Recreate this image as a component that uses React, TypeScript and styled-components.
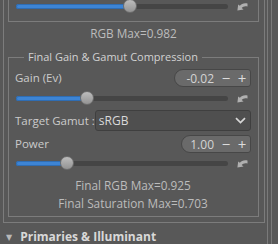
import React from "react";
import styled, { createGlobalStyle } from "styled-components";

const GlobalStyle = createGlobalStyle`
  html, body {
    margin: 0;
    padding: 0;
    background: #585858;
  }
  body {
    font-family: "Open Sans", "DejaVu Sans", sans-serif;
    font-size: 11.5px;
    color: #cbcbcb;
  }
`;

const Screen = styled.div`
  width: 278px;
  height: 244px;
  overflow: hidden;
  display: flex;
  flex-direction: row;
  background: #585858;
`;

const Main = styled.div`
  width: 266px;
  display: flex;
  flex-direction: column;
`;

const SideStrip = styled.div`
  flex: 1;
  display: flex;
  border-left: 1px solid #7a7a7a;
  margin-left: 1px;
  padding-left: 3px;
  div {
    border-left: 1px solid #7a7a7a;
    width: 100%;
  }
`;

const OuterPanel = styled.div`
  margin-left: 3px;
  width: 262px;
  box-sizing: border-box;
  border: 1px solid #7c7c7c;
  border-top: none;
  padding: 0 5px 5px 4px;
  display: flex;
  flex-direction: column;
`;

const TopBox = styled.div`
  border: 1px solid #7c7c7c;
  border-top: none;
  height: 22px;
  box-sizing: border-box;
  padding: 0 7px 0 6px;
`;

const Info = styled.div<{ $mt?: number }>`
  text-align: center;
  line-height: 16px;
  color: #bcbcbc;
  font-size: 11.8px;
  margin-top: ${(p) => p.$mt ?? 0}px;
`;

const Group = styled.fieldset`
  margin: 8px 0 0 0;
  padding: 0 7px 5px 6px;
  border: 1px solid #7c7c7c;
  min-width: 0;
  display: flex;
  flex-direction: column;
`;

const Legend = styled.legend`
  padding: 0 4px;
  margin-left: 9px;
  line-height: 16px;
  font-size: 11px;
  color: #d2d2d2;
`;

const Row = styled.div<{ $mt?: number; $h: number }>`
  display: flex;
  align-items: center;
  justify-content: space-between;
  height: ${(p) => p.$h}px;
  margin-top: ${(p) => p.$mt ?? 0}px;
`;

const Label = styled.span`
  line-height: 16px;
  color: #cbcbcb;
  white-space: nowrap;
`;

const Spin = styled.div<{ $w: number }>`
  width: ${(p) => p.$w}px;
  height: 18px;
  box-sizing: border-box;
  border: 1px solid #474747;
  border-radius: 9px 3px 3px 9px;
  background: #6a6a6a;
  display: flex;
  align-items: center;
  justify-content: flex-end;
  color: #d4d4d4;
`;

const SpinValue = styled.span`
  font-size: 12px;
  margin-right: 4px;
`;

const SpinButton = styled.span`
  width: 16px;
  text-align: center;
  font-size: 15px;
  line-height: 16px;
  color: #dcdcdc;
`;

const SliderRow = styled.div<{ $mt?: number }>`
  display: flex;
  align-items: center;
  height: 12px;
  margin-top: ${(p) => p.$mt ?? 0}px;
`;

const Track = styled.div`
  position: relative;
  margin-left: 1px;
  width: 212px;
  height: 5px;
  border-radius: 3px;
  background: #454545;
`;

const Fill = styled.div`
  height: 100%;
  border-radius: 3px;
  background: #3d84d4;
  box-shadow: inset 0 0 0 1px #2f6db3;
`;

const Knob = styled.div`
  position: absolute;
  top: 50%;
  width: 14px;
  height: 14px;
  margin: -7px 0 0 -7px;
  border-radius: 50%;
  box-sizing: border-box;
  border: 1px solid #6c6c6c;
  background: linear-gradient(#bdbdbd, #939393);
`;

const Reset = styled.div`
  flex: 1;
  display: flex;
  justify-content: center;
  padding-left: 5px;
  svg {
    display: block;
  }
`;

const Select = styled.div`
  width: 157px;
  height: 21px;
  box-sizing: border-box;
  border: 1px solid #3f3f3f;
  border-radius: 3px;
  background: #4f4f4f;
  display: flex;
  align-items: center;
  justify-content: space-between;
  padding: 0 4px 0 3px;
  color: #dadada;
  font-size: 12px;
`;

const Footer = styled.div`
  margin-top: 6px;
  padding-left: 6px;
  display: flex;
  align-items: center;
  gap: 8px;
  font-weight: bold;
  font-size: 12px;
  line-height: 16px;
  color: #d8d8d8;
`;

const Triangle = styled.span`
  font-size: 8px;
  color: #b8b8b8;
`;

const ResetIcon = () => (
  <svg width="12" height="9" viewBox="0 0 12 9">
    <path
      d="M11.5 1.6 C8.2 0.9 5.3 1.8 3.9 3.8 L2.2 2.4 L1.4 8.6 L7.6 7.6 L5.7 6.1 C7 4.5 9 3.7 11.5 4.6 Z"
      fill="#b0b0b0"
    />
  </svg>
);

const Chevron = () => (
  <svg width="11" height="7" viewBox="0 0 11 7">
    <path d="M1 1.2 L5.5 5.6 L10 1.2" stroke="#d6d6d6" strokeWidth="1.7" fill="none" />
  </svg>
);

const Slider = ({ value, mt }: { value: number; mt?: number }) => (
  <SliderRow $mt={mt}>
    <Track>
      <Fill style={{ width: `${value * 100}%` }} />
      <Knob style={{ left: `${value * 100}%` }} />
    </Track>
    <Reset>
      <ResetIcon />
    </Reset>
  </SliderRow>
);

const SpinBox = ({ value, width }: { value: string; width: number }) => (
  <Spin $w={width}>
    <SpinValue>{value}</SpinValue>
    <SpinButton>−</SpinButton>
    <SpinButton>+</SpinButton>
  </Spin>
);

export default function App() {
  return (
    <Screen>
      <GlobalStyle />
      <Main>
        <OuterPanel>
          <TopBox>
            <Slider value={0.54} />
          </TopBox>
          <Info $mt={3}>RGB Max=0.982</Info>
          <Group>
            <Legend>Final Gain &amp; Gamut Compression</Legend>
            <Row $h={18} $mt={4}>
              <Label>Gain (Ev)</Label>
              <SpinBox value="-0.02" width={77} />
            </Row>
            <Slider value={0.335} mt={5} />
            <Row $h={21} $mt={6}>
              <Label>Target Gamut :</Label>
              <Select>
                <span>sRGB</span>
                <Chevron />
              </Select>
            </Row>
            <Row $h={18} $mt={4}>
              <Label>Power</Label>
              <SpinBox value="1.00" width={70} />
            </Row>
            <Slider value={0.24} mt={4} />
            <Info $mt={8}>Final RGB Max=0.925</Info>
            <Info $mt={2}>Final Saturation Max=0.703</Info>
          </Group>
        </OuterPanel>
        <Footer>
          <Triangle>▼</Triangle>
          <span>Primaries &amp; Illuminant</span>
        </Footer>
      </Main>
      <SideStrip>
        <div />
      </SideStrip>
    </Screen>
  );
}
